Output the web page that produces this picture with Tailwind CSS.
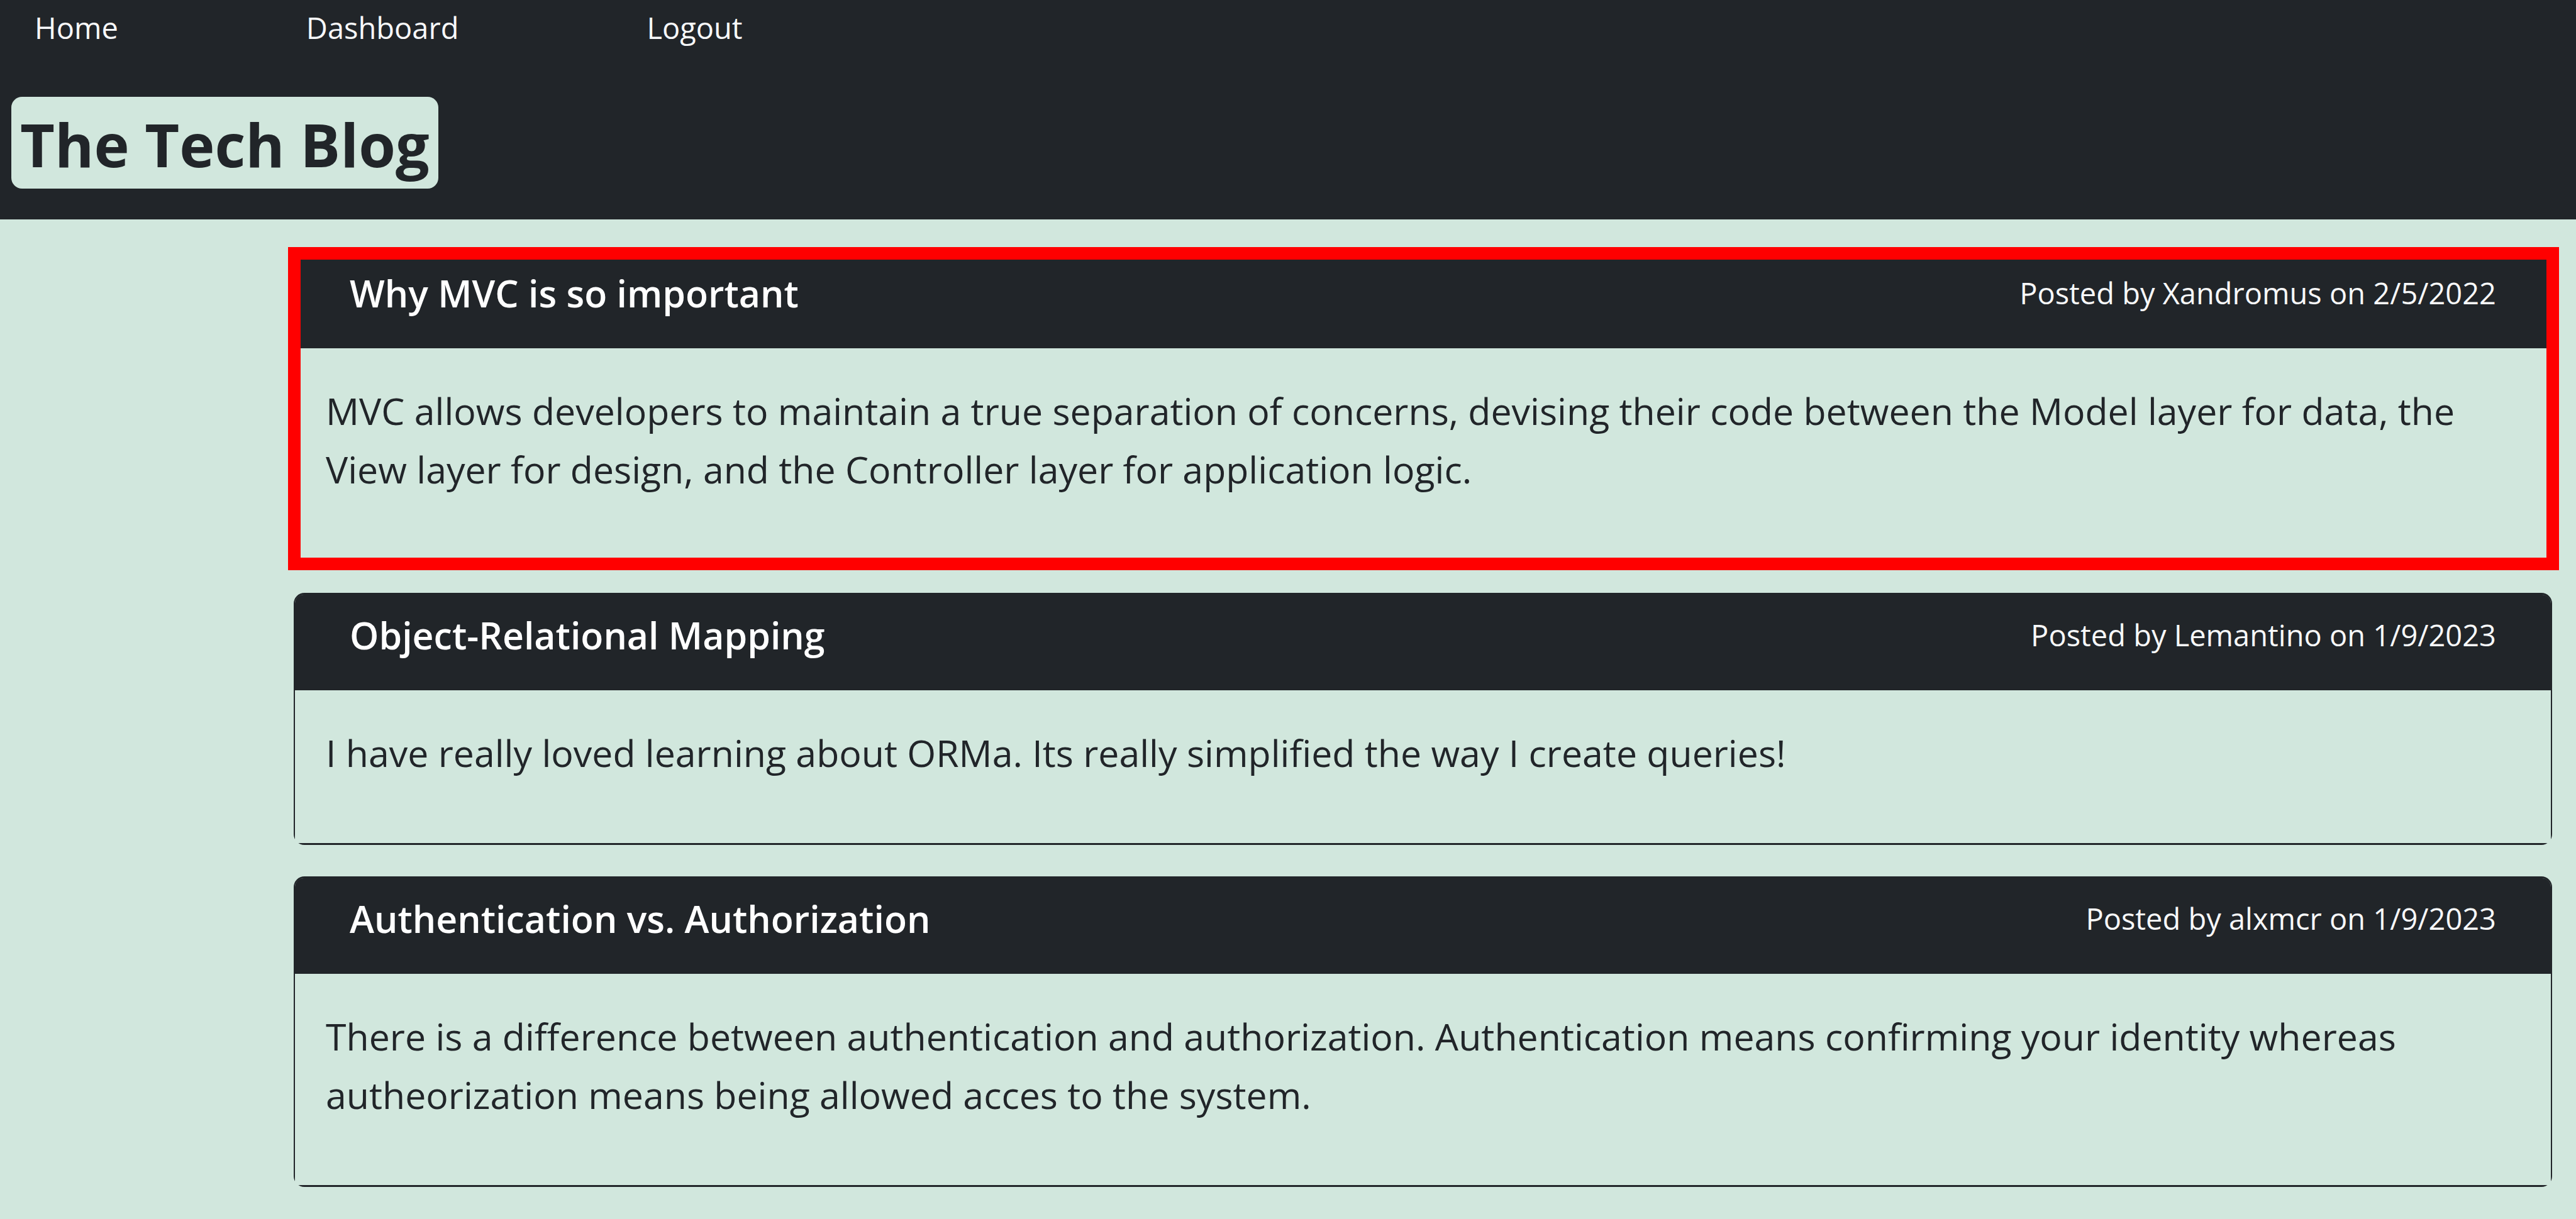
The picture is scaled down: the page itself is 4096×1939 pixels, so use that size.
<!DOCTYPE html>
<html lang="en">
<head>
<meta charset="utf-8">
<meta name="viewport" content="width=device-width, initial-scale=1">
<title>The Tech Blog</title>
<script src="https://cdn.jsdelivr.net/npm/@tailwindcss/browser@4"></script>
</head>
<body class="min-h-screen bg-[#d1e7dd] font-['Open_Sans','Noto_Sans',sans-serif] text-[#212529]">
  <header class="bg-[#212529] pt-[9px] pb-[49px]">
    <nav class="flex gap-[299px] px-[55px] text-[47px] leading-[70px] text-[#f8f9fa]">
      <a href="#">Home</a>
      <a href="#">Dashboard</a>
      <a href="#">Logout</a>
    </nav>
    <h1 class="mt-[75px] ml-[18px] w-fit rounded-[17px] bg-[#d1e7dd] px-[14px] pt-1 text-[95px] leading-[142px] font-bold">The Tech Blog</h1>
  </header>

  <main class="flex flex-col gap-[50px] pt-[50px] pr-[38px] pb-[50px] pl-[467px]">
    <article class="relative rounded-[17px] border-x-2 border-y-[3px] border-[#212529]">
      <div class="flex justify-between rounded-t-[14px] bg-[#212529] px-[87px] pt-4 pb-10 leading-[96px]">
        <h2 class="text-[59px] font-semibold text-white">Why MVC is so important</h2>
        <p class="text-[47px] text-[#f8f9fa]">Posted by Xandromus on 2/5/2022</p>
      </div>
      <p class="bg-[#d1e7dd] px-[49px] pt-[53px] pb-[97px] text-[59px] leading-[93px]">MVC allows developers to maintain a true separation of concerns, devising their code between the Model layer for data, the View layer for design, and the Controller layer for application logic.</p>
      <!-- highlight frame around the featured post -->
      <div class="pointer-events-none absolute -top-[9px] -right-[13px] -bottom-[17px] -left-[11px] border-[20px] border-[#ff0000]"></div>
    </article>

    <article class="rounded-[17px] border-x-2 border-y-[3px] border-[#212529]">
      <div class="flex justify-between rounded-t-[14px] bg-[#212529] px-[87px] pt-4 pb-10 leading-[96px]">
        <h2 class="text-[59px] font-semibold text-white">Object-Relational Mapping</h2>
        <p class="text-[47px] text-[#f8f9fa]">Posted by Lemantino on 1/9/2023</p>
      </div>
      <p class="bg-[#d1e7dd] px-[49px] pt-[53px] pb-[97px] text-[59px] leading-[93px]">I have really loved learning about ORMa. Its really simplified the way I create queries!</p>
    </article>

    <article class="rounded-[17px] border-x-2 border-y-[3px] border-[#212529]">
      <div class="flex justify-between rounded-t-[14px] bg-[#212529] px-[87px] pt-4 pb-10 leading-[96px]">
        <h2 class="text-[59px] font-semibold text-white">Authentication vs. Authorization</h2>
        <p class="text-[47px] text-[#f8f9fa]">Posted by alxmcr on 1/9/2023</p>
      </div>
      <p class="bg-[#d1e7dd] px-[49px] pt-[53px] pb-[97px] text-[59px] leading-[93px]">There is a difference between authentication and authorization. Authentication means confirming your identity whereas autheorization means being allowed acces to the system.</p>
    </article>
  </main>
</body>
</html>
